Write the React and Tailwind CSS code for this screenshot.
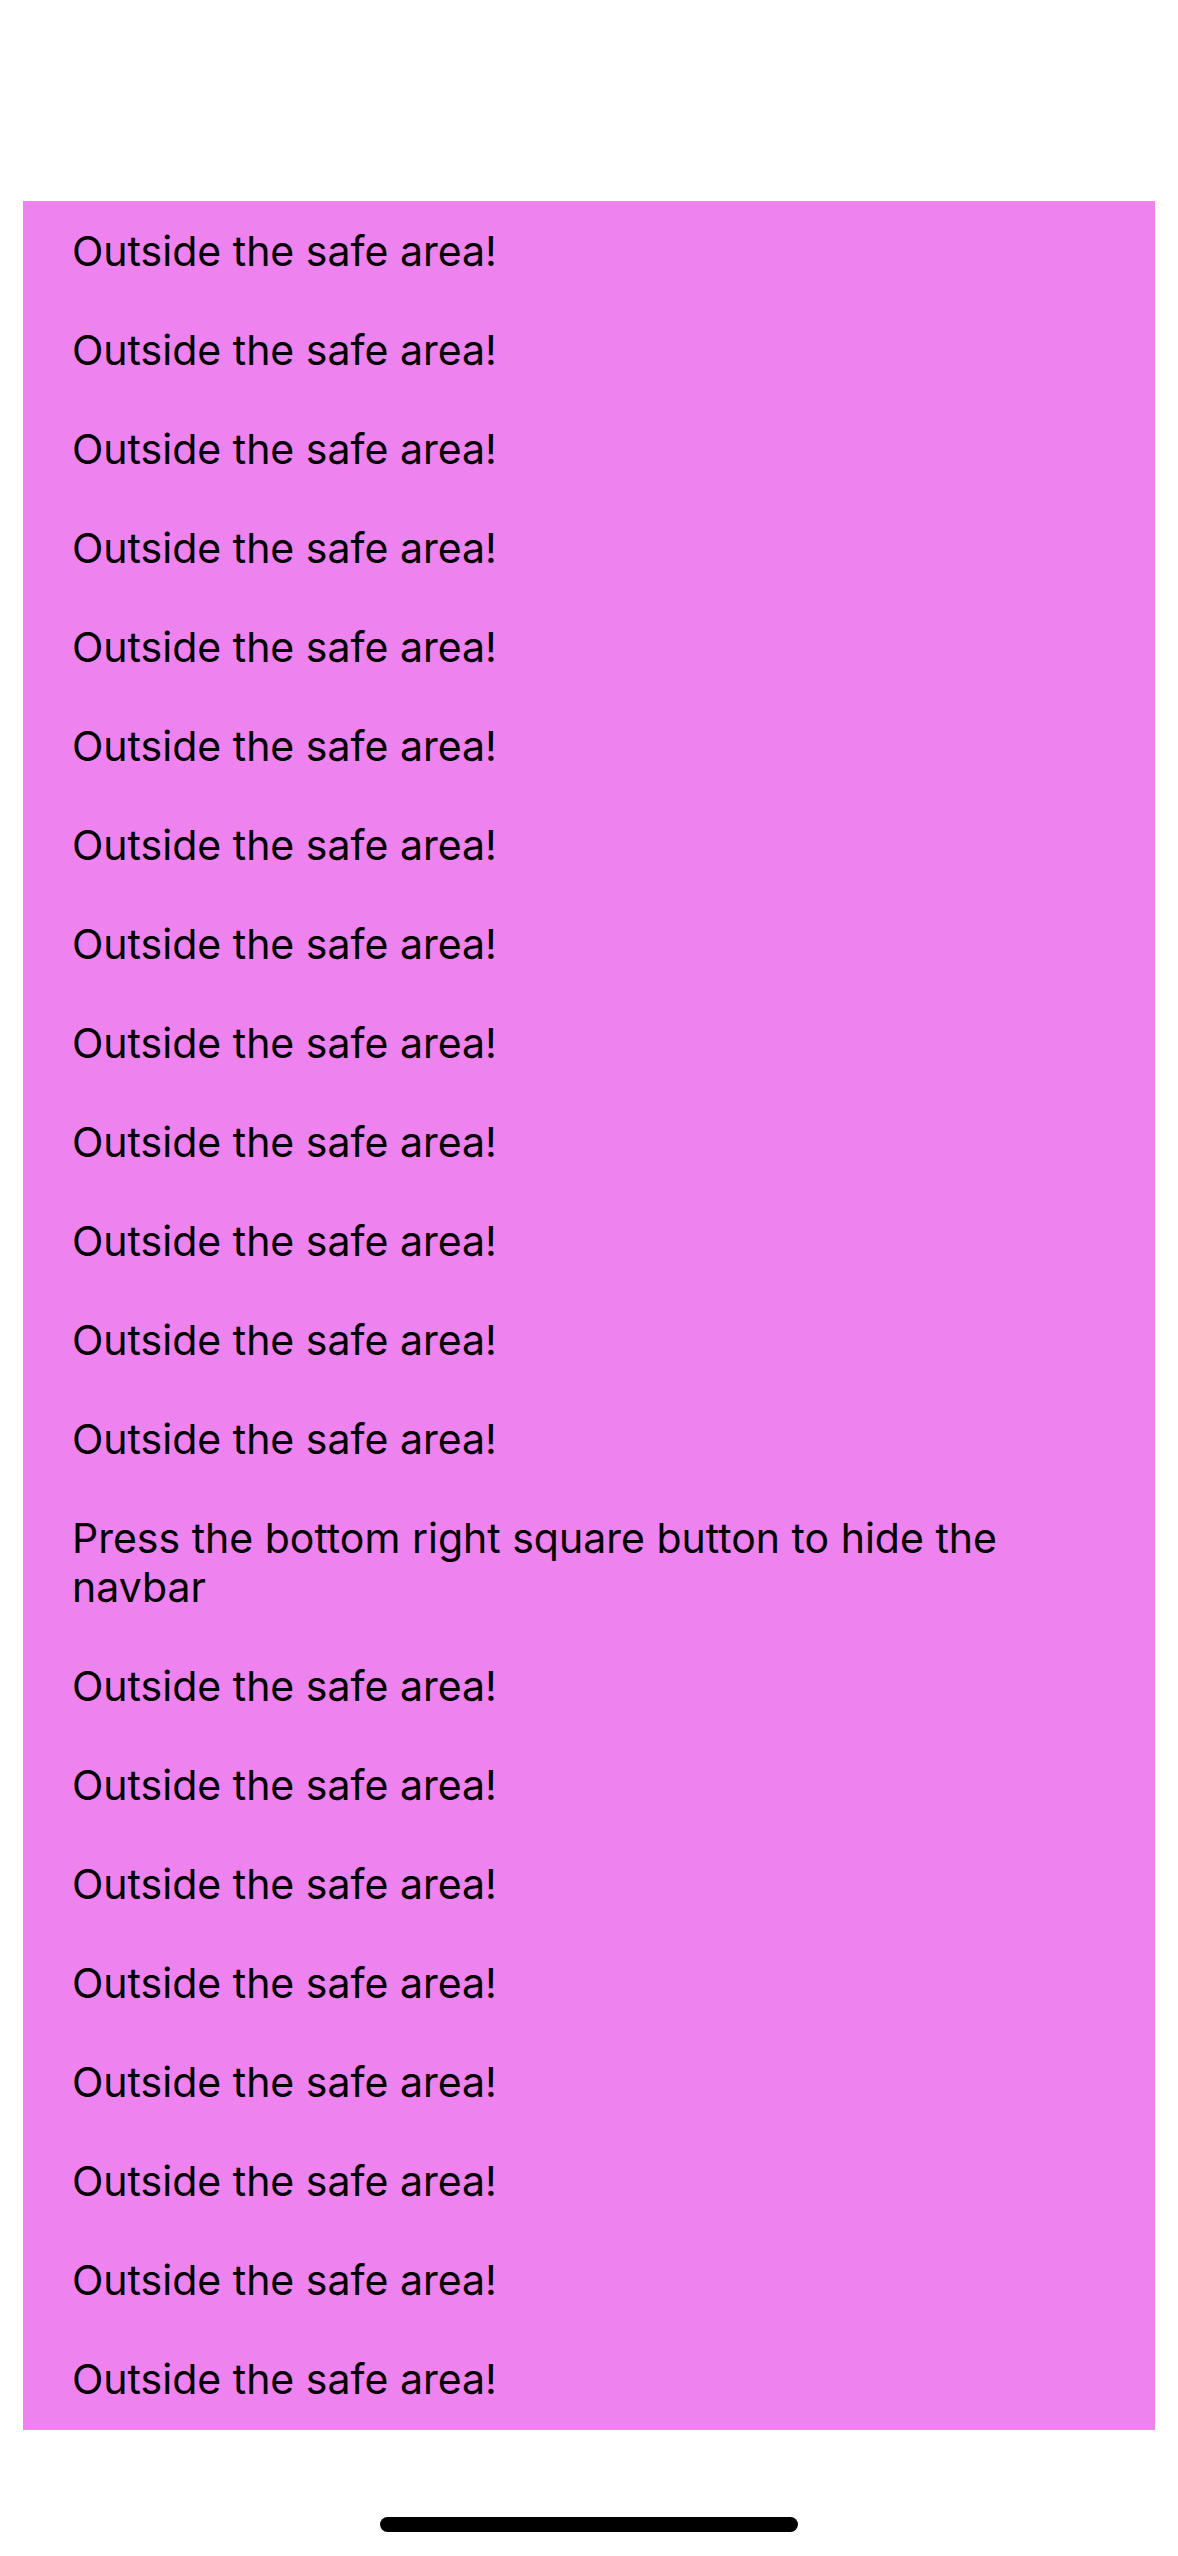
import React from 'react';

export default function App() {
  const rows = [];
  for (let i = 0; i < 13; i++) rows.push('Outside the safe area!');
  rows.push('Press the bottom right square button to hide the navbar');
  for (let i = 0; i < 8; i++) rows.push('Outside the safe area!');

  return (
    <div className="w-[1178px] h-[2556px] bg-white flex flex-col" style={{ fontFamily: 'Inter, "Noto Sans", sans-serif' }}>
      <div className="h-[201px] shrink-0"></div>
      <div className="mx-[23px] bg-[#ee82ee] py-px">
        {rows.map((text, i) => (
          <div key={i} className="pl-[49px] pr-[80px] py-[25px] text-[41px] leading-[49px] text-black">
            {text}
          </div>
        ))}
      </div>
      <div className="flex-1 flex items-end justify-center pb-[24px]">
        <div className="w-[418px] h-[15px] rounded-full bg-black"></div>
      </div>
    </div>
  );
}
